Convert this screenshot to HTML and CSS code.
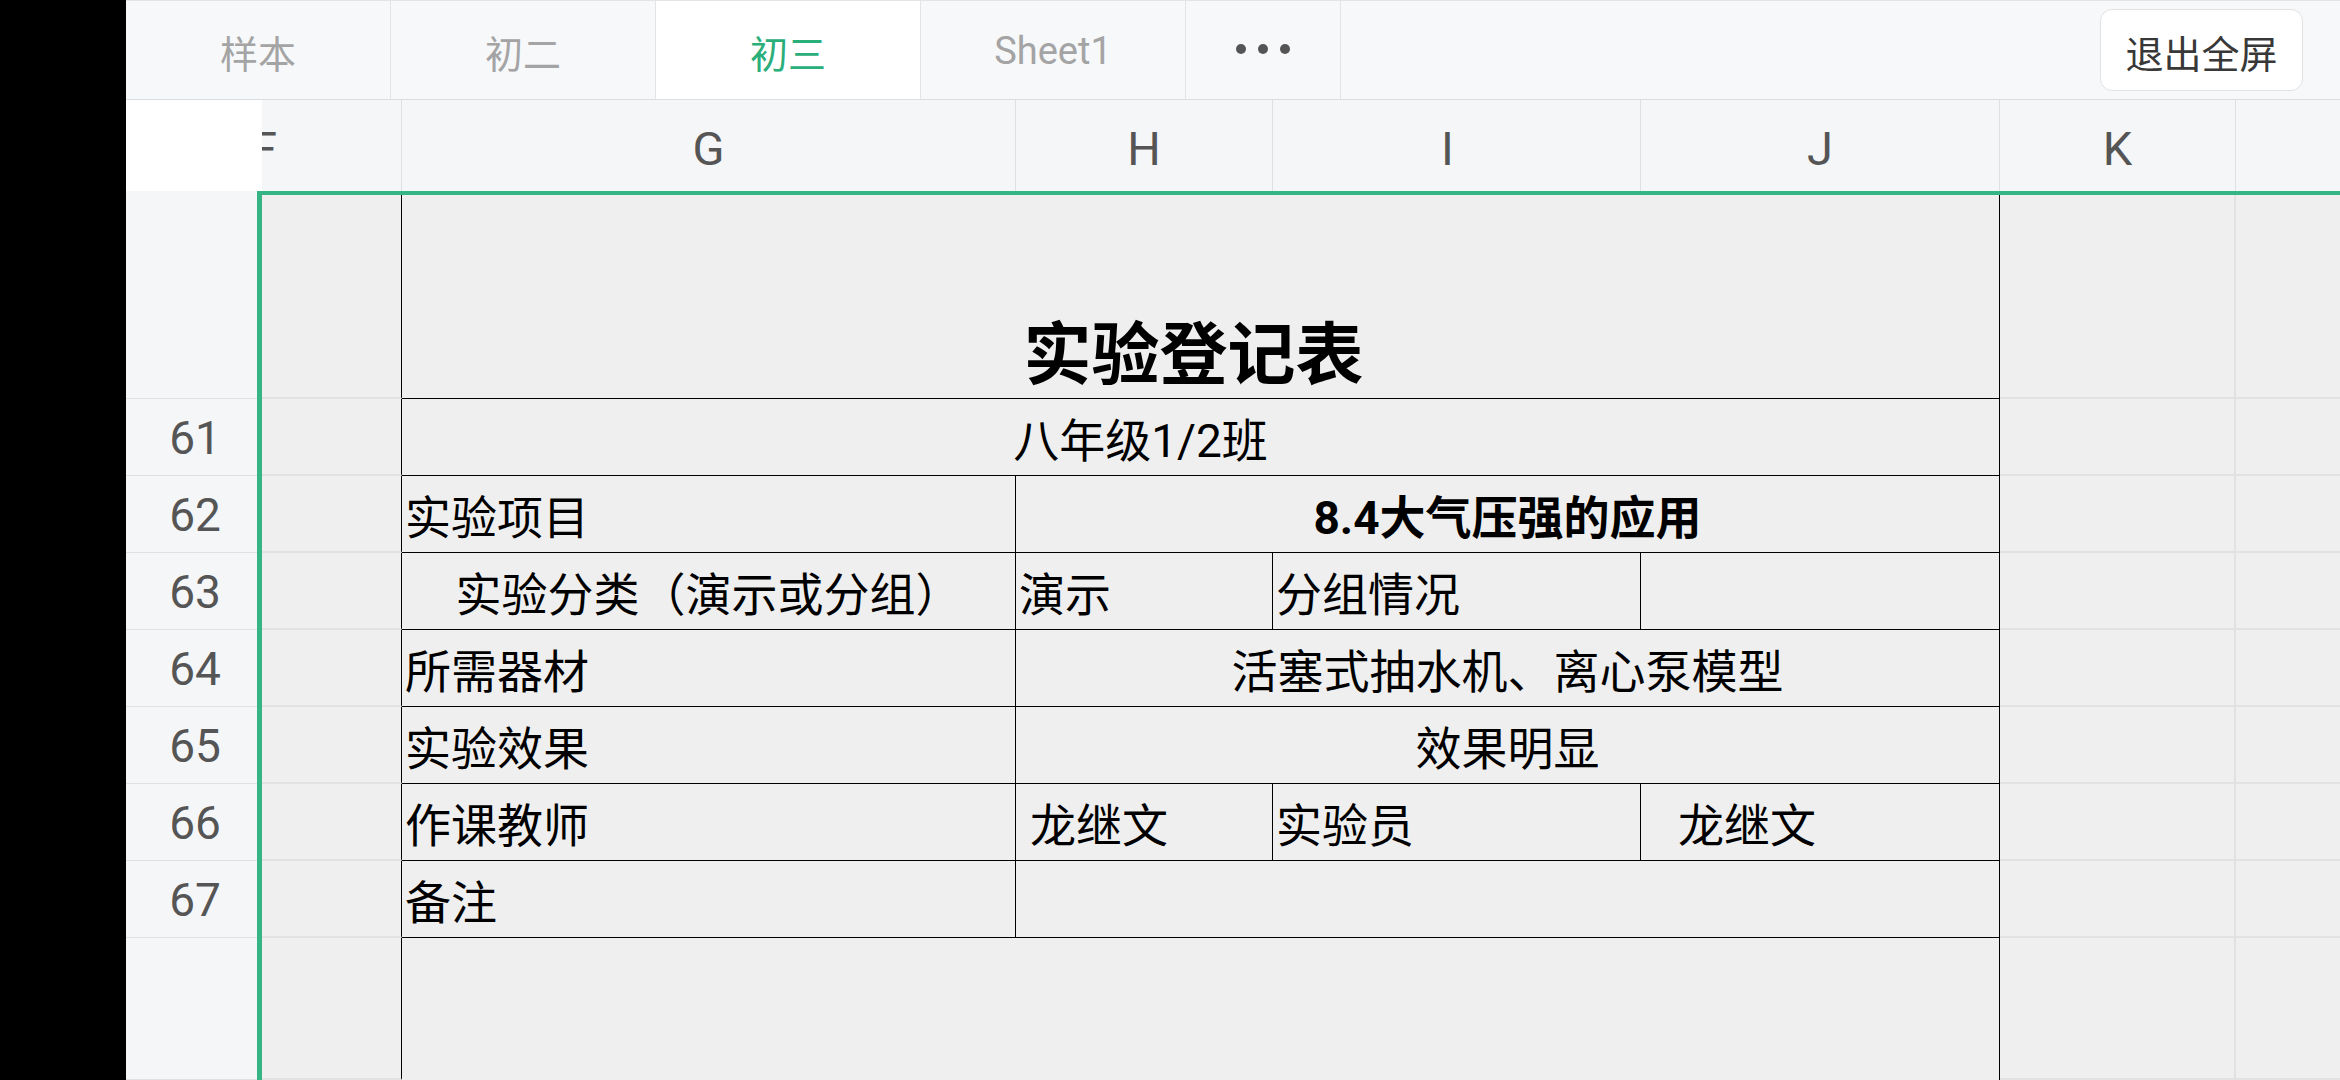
FILE: index.html
```html
<!DOCTYPE html>
<html lang="zh-CN">
<head>
    <meta charset="utf-8">
    <title>初三 - 实验登记表</title>
    <link rel="stylesheet" href="styles.css">
</head>
<body>
<div class="screen">
    <div class="bezel"></div>
    <div class="app">
        <div class="tabbar">
            <div class="tab">样本</div>
            <div class="tab">初二</div>
            <div class="tab active">初三</div>
            <div class="tab">Sheet1</div>
            <div class="tab more"><span class="dot"></span><span class="dot"></span><span class="dot"></span></div>
            <div class="spacer"></div>
            <button class="exit">退出全屏</button>
        </div>

        <div class="sheet">
            <!-- column headers -->
            <div class="corner"></div>
            <div class="hd cut"><span>F</span></div>
            <div class="hd">G</div>
            <div class="hd">H</div>
            <div class="hd narrow">I</div>
            <div class="hd">J</div>
            <div class="hd">K</div>
            <div class="hd last"></div>

            <!-- row 60 -->
            <div class="rn"></div>
            <div class="c edge"></div>
            <div class="t title span4">实验登记表</div>
            <div class="c"></div>
            <div class="c last"></div>

            <!-- row 61 -->
            <div class="rn">61</div>
            <div class="c edge"></div>
            <div class="t center span4 shift">八年级1/2班</div>
            <div class="c"></div>
            <div class="c last"></div>

            <!-- row 62 -->
            <div class="rn">62</div>
            <div class="c edge"></div>
            <div class="t">实验项目</div>
            <div class="t center bold span3">8.4大气压强的应用</div>
            <div class="c"></div>
            <div class="c last"></div>

            <!-- row 63 -->
            <div class="rn">63</div>
            <div class="c edge"></div>
            <div class="t center">实验分类（演示或分组）</div>
            <div class="t">演示</div>
            <div class="t">分组情况</div>
            <div class="t"></div>
            <div class="c"></div>
            <div class="c last"></div>

            <!-- row 64 -->
            <div class="rn">64</div>
            <div class="c edge"></div>
            <div class="t">所需器材</div>
            <div class="t center span3">活塞式抽水机、离心泵模型</div>
            <div class="c"></div>
            <div class="c last"></div>

            <!-- row 65 -->
            <div class="rn">65</div>
            <div class="c edge"></div>
            <div class="t">实验效果</div>
            <div class="t center span3">效果明显</div>
            <div class="c"></div>
            <div class="c last"></div>

            <!-- row 66 -->
            <div class="rn">66</div>
            <div class="c edge"></div>
            <div class="t">作课教师</div>
            <div class="t pad1">龙继文</div>
            <div class="t">实验员</div>
            <div class="t pad3">龙继文</div>
            <div class="c"></div>
            <div class="c last"></div>

            <!-- row 67 -->
            <div class="rn">67</div>
            <div class="c edge"></div>
            <div class="t">备注</div>
            <div class="t span3"></div>
            <div class="c"></div>
            <div class="c last"></div>

            <!-- row 68 (partly visible) -->
            <div class="rn"></div>
            <div class="c edge"></div>
            <div class="t open span4"></div>
            <div class="c"></div>
            <div class="c last"></div>

            <div class="selection"></div>
        </div>
    </div>
</div>
</body>
</html>
```

FILE: styles.css
```css
* {
    box-sizing: border-box;
}

html,
body {
    margin: 0;
    padding: 0;
}

body {
    width: 2340px;
    height: 1080px;
    overflow: hidden;
    background: #000;
    font-family: Roboto, "Noto Sans CJK SC", sans-serif;
}

.screen {
    display: flex;
    height: 1080px;
}

.bezel {
    width: 126px;
    flex: none;
    background: #000;
}

.app {
    flex: 1;
    display: flex;
    flex-direction: column;
    background: #fff;
}

/* sheet tabs */
.tabbar {
    height: 100px;
    flex: none;
    display: flex;
    background: #f7f8fa;
    border-top: 1px solid #e3e4e6;
    border-bottom: 1px solid #dcdde0;
}

.tab {
    width: 265px;
    display: flex;
    align-items: center;
    justify-content: center;
    padding-top: 2px;
    border-right: 1px solid #e3e4e6;
    font-size: 38px;
    color: #a4a4a4;
}

.tab.active {
    background: #fff;
    color: #2aae7a;
}

.tab.more {
    width: 155px;
    gap: 12px;
    padding-top: 0;
    padding-bottom: 2px;
}

.dot {
    width: 10px;
    height: 10px;
    border-radius: 50%;
    background: #555;
}

.spacer {
    flex: 1;
}

.exit {
    align-self: center;
    width: 203px;
    height: 82px;
    margin-right: 37px;
    padding: 2px 0 0;
    border: 1px solid #e1e2e4;
    border-radius: 12px;
    background: #fff;
    font-family: "Noto Sans CJK SC", sans-serif;
    font-size: 38px;
    color: #383838;
}

/* grid */
.sheet {
    flex: 1;
    position: relative;
    display: grid;
    grid-template-columns: 136px 140px 614px 257px 368px 359px 236px 1fr;
    grid-template-rows: 91px 208px repeat(7, 77px) 1fr;
    background: #efefef;
    overflow: hidden;
}

.corner {
    background: #fff;
}

.hd {
    display: flex;
    align-items: center;
    justify-content: center;
    padding-top: 6px;
    background: #f5f6f8;
    border-right: 1px solid #dfe0e2;
    font-size: 47px;
    color: #555;
}

.hd.narrow {
    padding-right: 18px;
}

.hd.cut {
    justify-content: flex-start;
    overflow: hidden;
}

.hd.cut span {
    margin-left: -11px;
}

.hd.last {
    border-right: none;
}

.rn {
    display: flex;
    align-items: center;
    justify-content: center;
    padding: 2px 0 0 2px;
    background: #f5f6f8;
    border-bottom: 1px solid #dfe0e2;
    font-size: 46px;
    color: #555;
}

.c {
    background: #efefef;
    border-right: 2px solid #e2e2e2;
    border-bottom: 2px solid #e2e2e2;
}

.c.edge {
    border-right: 1px solid #000;
}

.c.last {
    border-right: none;
}

.t {
    display: flex;
    align-items: center;
    padding-left: 3px;
    background: #efefef;
    border-right: 1px solid #000;
    border-bottom: 1px solid #000;
    font-size: 46px;
    color: #000;
    white-space: nowrap;
}

.t.center {
    justify-content: center;
    padding-left: 0;
}

.t.bold {
    font-weight: 700;
}

.t.span3 {
    grid-column: span 3;
}

.t.span4 {
    grid-column: span 4;
}

.t.title {
    justify-content: center;
    align-items: flex-end;
    padding: 0 14px 8px 0;
    font-size: 68px;
    font-weight: 700;
    line-height: 1;
}

.t.shift {
    padding-right: 120px;
}

.t.pad1 {
    padding-left: 14px;
}

.t.pad3 {
    padding-left: 37px;
}

.t.open {
    border-bottom: none;
}

/* current selection frame */
.selection {
    position: absolute;
    left: 131px;
    top: 91px;
    right: 0;
    bottom: 0;
    border-top: 4px solid #35b584;
    border-left: 5px solid #35b584;
    pointer-events: none;
}
```
